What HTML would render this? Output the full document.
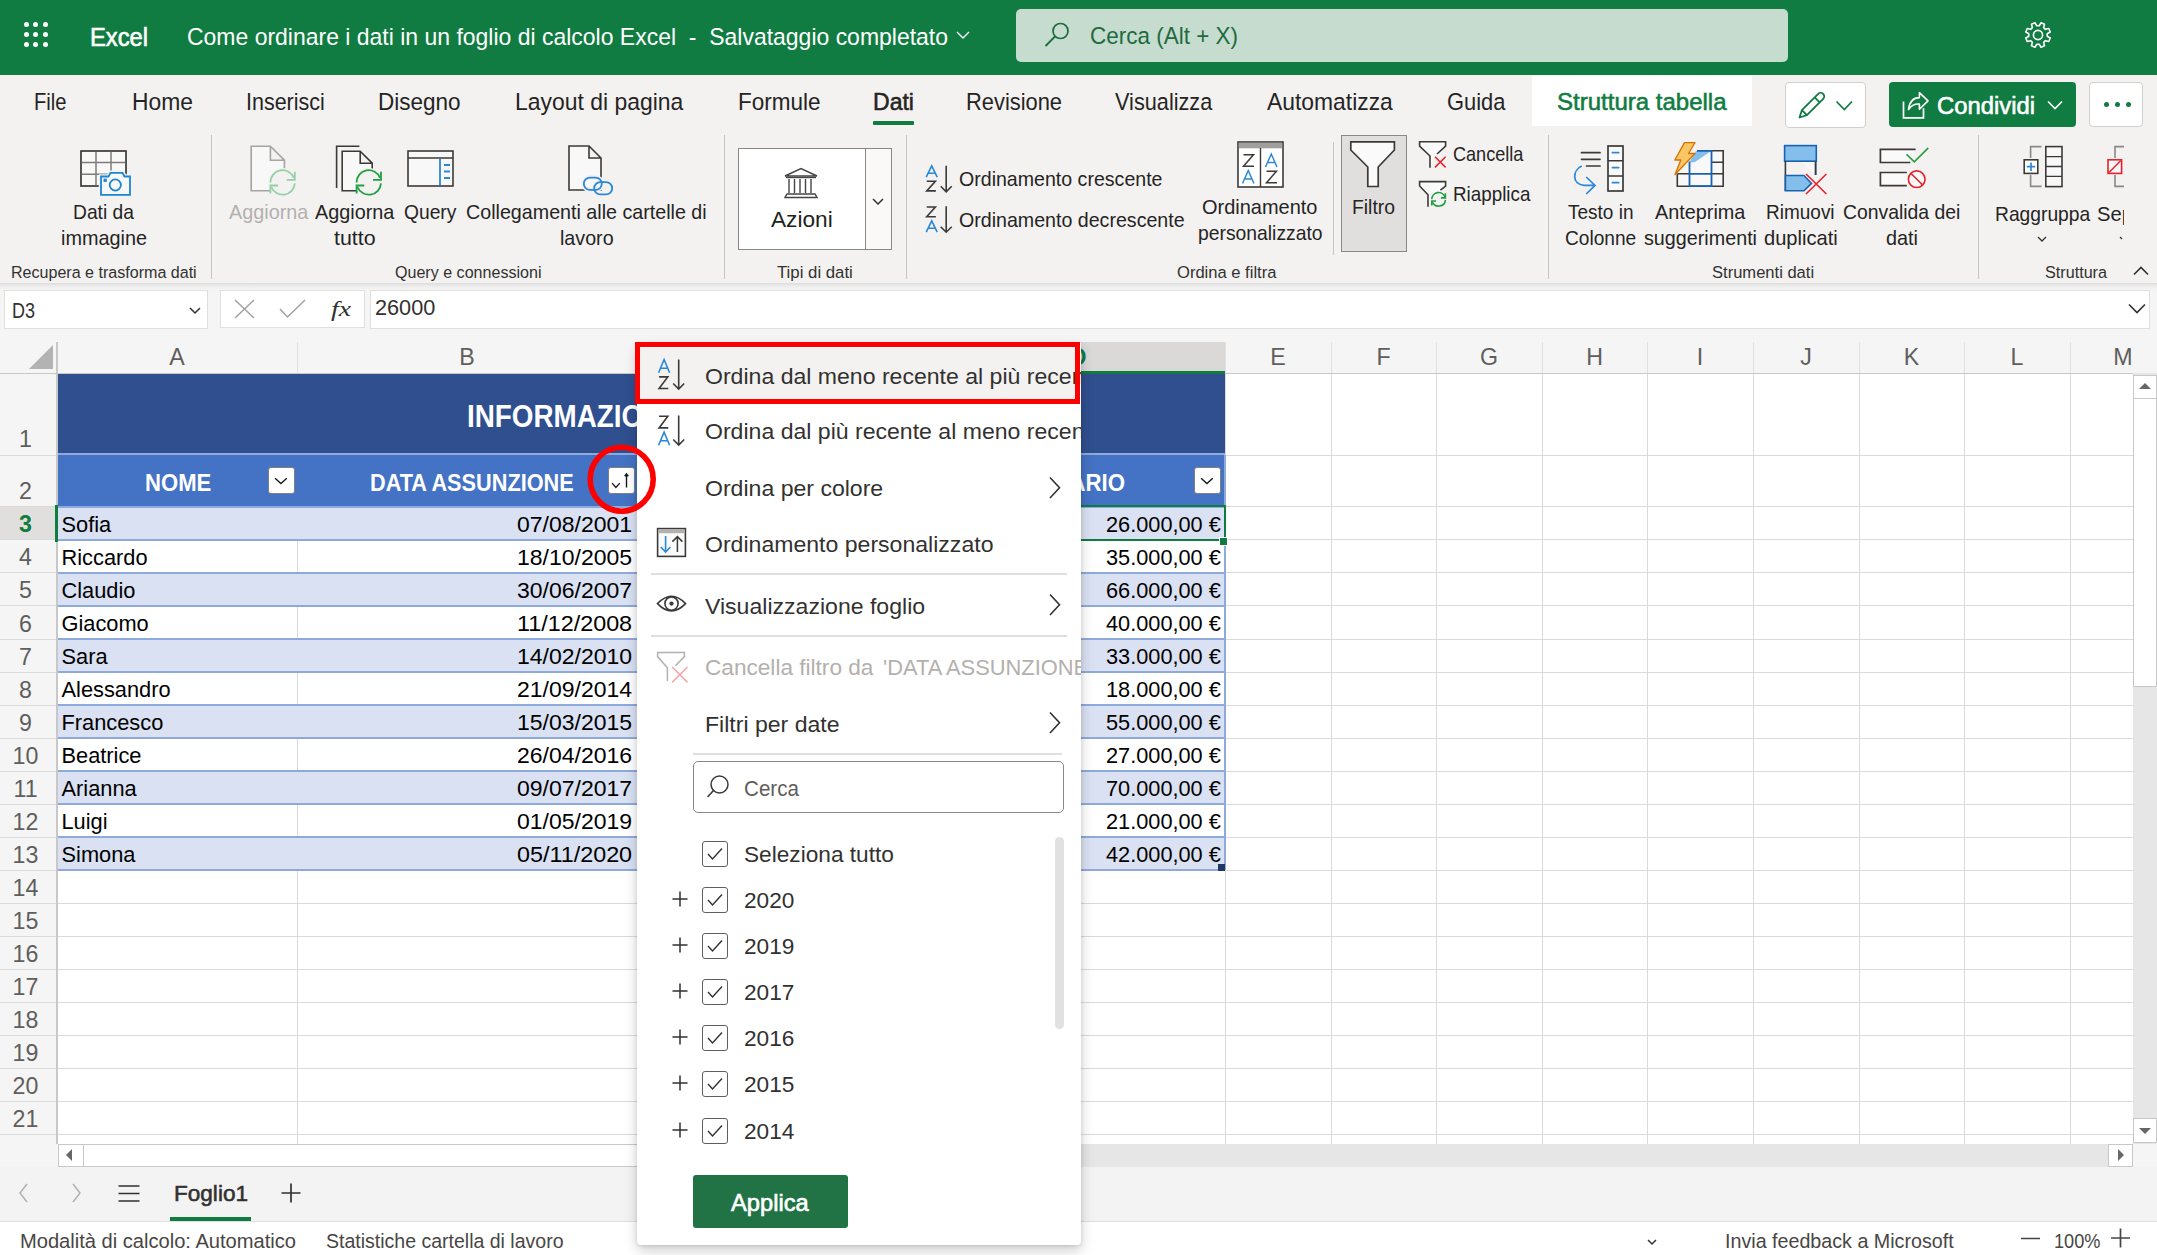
<!DOCTYPE html>
<html><head><meta charset="utf-8"><title>Excel</title>
<style>
html,body{margin:0;padding:0;}
body{width:2157px;height:1255px;overflow:hidden;position:relative;background:#fff;font-family:"Liberation Sans",sans-serif;}
.tx{position:absolute;white-space:pre;line-height:1;transform-origin:0 0;}
svg{position:absolute;overflow:visible;}
</style></head><body>
<div style="position:absolute;left:0px;top:0px;width:2157px;height:75px;background:#107c41"></div>
<div style="position:absolute;left:23.5px;top:22.0px;width:5px;height:5px;border-radius:50%;background:#fff"></div>
<div style="position:absolute;left:23.5px;top:31.8px;width:5px;height:5px;border-radius:50%;background:#fff"></div>
<div style="position:absolute;left:23.5px;top:41.6px;width:5px;height:5px;border-radius:50%;background:#fff"></div>
<div style="position:absolute;left:33.3px;top:22.0px;width:5px;height:5px;border-radius:50%;background:#fff"></div>
<div style="position:absolute;left:33.3px;top:31.8px;width:5px;height:5px;border-radius:50%;background:#fff"></div>
<div style="position:absolute;left:33.3px;top:41.6px;width:5px;height:5px;border-radius:50%;background:#fff"></div>
<div style="position:absolute;left:43.1px;top:22.0px;width:5px;height:5px;border-radius:50%;background:#fff"></div>
<div style="position:absolute;left:43.1px;top:31.8px;width:5px;height:5px;border-radius:50%;background:#fff"></div>
<div style="position:absolute;left:43.1px;top:41.6px;width:5px;height:5px;border-radius:50%;background:#fff"></div>
<span id="t0" class="tx" style="transform:scaleX(0.9324);left:90.00px;top:25.00px;font-size:25.44px;color:#fff;font-weight:400;font-family:'Liberation Sans', sans-serif;-webkit-text-stroke:0.6px #fff;">Excel</span>
<span id="t1" class="tx" style="transform:scaleX(0.9880);left:187.00px;top:26.00px;font-size:23.26px;color:#fff;font-weight:400;font-family:'Liberation Sans', sans-serif;">Come ordinare i dati in un foglio di calcolo Excel  -  Salvataggio completato</span>
<svg style="left:956px;top:31px" width="14" height="9"><path d="M1 1 L7 7 L13 1" fill="none" stroke="#fff" stroke-width="1.4"/></svg>
<div style="position:absolute;left:1016px;top:9px;width:772px;height:53px;border-radius:5px;background:#c6dcce"></div>
<svg style="left:1044px;top:22px" width="26" height="26"><circle cx="16.5" cy="9" r="7.5" fill="none" stroke="#1d6b3f" stroke-width="1.7"/><path d="M11 14.5 L2 23.5" stroke="#1d6b3f" stroke-width="1.8" stroke-linecap="round"/></svg>
<span id="t2" class="tx" style="transform:scaleX(0.9666);left:1090.00px;top:25.00px;font-size:23.26px;color:#1d6b3f;font-weight:400;font-family:'Liberation Sans', sans-serif;">Cerca (Alt + X)</span>
<svg style="left:2024px;top:21px" width="28" height="28" viewBox="0 0 28 28"><g fill="none" stroke="#fff" stroke-width="1.6">
<path d="M15.21 4.78 L17.05 1.77 L20.49 3.20 L19.66 6.62 L21.38 8.34 L24.80 7.51 L26.23 10.95 L23.22 12.79 L23.22 15.21 L26.23 17.05 L24.80 20.49 L21.38 19.66 L19.66 21.38 L20.49 24.80 L17.05 26.23 L15.21 23.22 L12.79 23.22 L10.95 26.23 L7.51 24.80 L8.34 21.38 L6.62 19.66 L3.20 20.49 L1.77 17.05 L4.78 15.21 L4.78 12.79 L1.77 10.95 L3.20 7.51 L6.62 8.34 L8.34 6.62 L7.51 3.20 L10.95 1.77 L12.79 4.78 Z" stroke-linejoin="round"/>
<circle cx="14" cy="14" r="4.6"/></g></svg>
<div style="position:absolute;left:0px;top:75px;width:2157px;height:208px;background:#f3f2f1"></div>
<span id="t3" class="tx" style="transform:scaleX(0.8674);left:34.00px;top:91.00px;font-size:23.26px;color:#252423;font-weight:400;font-family:'Liberation Sans', sans-serif;">File</span>
<span id="t4" class="tx" style="transform:scaleX(0.9834);left:132.00px;top:91.00px;font-size:23.26px;color:#252423;font-weight:400;font-family:'Liberation Sans', sans-serif;">Home</span>
<span id="t5" class="tx" style="transform:scaleX(0.9240);left:245.70px;top:91.00px;font-size:23.26px;color:#252423;font-weight:400;font-family:'Liberation Sans', sans-serif;">Inserisci</span>
<span id="t6" class="tx" style="transform:scaleX(0.9682);left:378.00px;top:91.00px;font-size:23.26px;color:#252423;font-weight:400;font-family:'Liberation Sans', sans-serif;">Disegno</span>
<span id="t7" class="tx" style="transform:scaleX(0.9863);left:515.40px;top:91.00px;font-size:23.26px;color:#252423;font-weight:400;font-family:'Liberation Sans', sans-serif;">Layout di pagina</span>
<span id="t8" class="tx" style="transform:scaleX(0.9686);left:738.00px;top:91.00px;font-size:23.26px;color:#252423;font-weight:400;font-family:'Liberation Sans', sans-serif;">Formule</span>
<span id="t9" class="tx" style="transform:scaleX(0.9913);left:873.00px;top:91.00px;font-size:23.26px;color:#252423;font-weight:400;font-family:'Liberation Sans', sans-serif;-webkit-text-stroke:0.55px #252423;">Dati</span>
<span id="t10" class="tx" style="transform:scaleX(0.9403);left:966.00px;top:91.00px;font-size:23.26px;color:#252423;font-weight:400;font-family:'Liberation Sans', sans-serif;">Revisione</span>
<span id="t11" class="tx" style="transform:scaleX(0.9332);left:1115.00px;top:91.00px;font-size:23.26px;color:#252423;font-weight:400;font-family:'Liberation Sans', sans-serif;">Visualizza</span>
<span id="t12" class="tx" style="transform:scaleX(0.9833);left:1267.20px;top:91.00px;font-size:23.26px;color:#252423;font-weight:400;font-family:'Liberation Sans', sans-serif;">Automatizza</span>
<span id="t13" class="tx" style="transform:scaleX(0.9412);left:1447.00px;top:91.00px;font-size:23.26px;color:#252423;font-weight:400;font-family:'Liberation Sans', sans-serif;">Guida</span>
<div style="position:absolute;left:873px;top:121px;width:41px;height:4px;background:#107c41;border-radius:1px"></div>
<div style="position:absolute;left:1532px;top:76px;width:220px;height:50px;background:#fff"></div>
<span id="t14" class="tx" style="transform:scaleX(1.0327);left:1557.00px;top:91.00px;font-size:23.26px;color:#107c41;font-weight:400;font-family:'Liberation Sans', sans-serif;-webkit-text-stroke:0.55px #107c41;">Struttura tabella</span>
<div style="position:absolute;left:1785px;top:82px;width:80.5px;height:45.5px;box-sizing:border-box;border:1px solid #d2d0ce;border-radius:4px;background:#fff"></div>
<svg style="left:0;top:0" width="1" height="1"><path d="M1799.5 117.5 L1801.9 110.1 L1818.2 93.8 A3.5 3.5 0 0 1 1823.2 98.8 L1806.9 115.1 Z M1801.9 110.1 L1806.9 115.1 M1814.7 97.3 L1819.7 102.3" fill="none" stroke="#107c41" stroke-width="1.8" stroke-linejoin="round"/></svg>
<svg style="left:1836px;top:100px" width="17" height="11"><path d="M0.5 1.5 L8.3 9.5 L16 1.5" fill="none" stroke="#107c41" stroke-width="1.7"/></svg>
<div style="position:absolute;left:1889px;top:82px;width:187px;height:45px;border-radius:4px;background:#107c41"></div>
<svg style="left:0;top:0" width="1" height="1"><path d="M1903.5 101.5 V117.8 H1923.5 V108.2" fill="none" stroke="#fff" stroke-width="1.7"/><path d="M1908.5 109.5 Q1910 97.6 1919.4 97.6 V92.6 L1928 100.9 L1919.4 109.3 V104 Q1912.5 103.5 1908.5 109.5 Z" fill="none" stroke="#fff" stroke-width="1.6" stroke-linejoin="round"/></svg>
<span id="t15" class="tx" style="transform:scaleX(0.9940);left:1937.00px;top:94.00px;font-size:23.98px;color:#fff;font-weight:400;font-family:'Liberation Sans', sans-serif;-webkit-text-stroke:0.6px #fff;">Condividi</span>
<svg style="left:2047px;top:100px" width="16" height="10"><path d="M1 1.5 L8 8.5 L15 1.5" fill="none" stroke="#fff" stroke-width="1.6"/></svg>
<div style="position:absolute;left:2089px;top:82px;width:54px;height:45px;box-sizing:border-box;border:1px solid #d2d0ce;border-radius:4px;background:#fff"></div>
<div style="position:absolute;left:2104px;top:102px;width:5px;height:5px;border-radius:50%;background:#107c41"></div>
<div style="position:absolute;left:2115px;top:102px;width:5px;height:5px;border-radius:50%;background:#107c41"></div>
<div style="position:absolute;left:2126px;top:102px;width:5px;height:5px;border-radius:50%;background:#107c41"></div>
<div style="position:absolute;left:211px;top:135px;width:1.3px;height:144px;background:#c8c6c4"></div>
<div style="position:absolute;left:724px;top:135px;width:1.3px;height:144px;background:#c8c6c4"></div>
<div style="position:absolute;left:906px;top:135px;width:1.3px;height:144px;background:#c8c6c4"></div>
<div style="position:absolute;left:1548px;top:135px;width:1.3px;height:144px;background:#c8c6c4"></div>
<div style="position:absolute;left:1977.5px;top:135px;width:1.3px;height:144px;background:#c8c6c4"></div>
<div style="position:absolute;left:1333px;top:142px;width:1.3px;height:113px;background:#c8c6c4"></div>
<span id="t16" class="tx" style="transform:scaleX(0.9527);left:11.30px;top:265.00px;font-size:16.86px;color:#323130;font-weight:400;font-family:'Liberation Sans', sans-serif;">Recupera e trasforma dati</span>
<span id="t17" class="tx" style="transform:scaleX(0.9531);left:394.50px;top:265.00px;font-size:16.86px;color:#323130;font-weight:400;font-family:'Liberation Sans', sans-serif;">Query e connessioni</span>
<span id="t18" class="tx" style="transform:scaleX(0.9945);left:777.00px;top:265.00px;font-size:16.86px;color:#323130;font-weight:400;font-family:'Liberation Sans', sans-serif;">Tipi di dati</span>
<span id="t19" class="tx" style="transform:scaleX(0.9822);left:1177.00px;top:265.00px;font-size:16.86px;color:#323130;font-weight:400;font-family:'Liberation Sans', sans-serif;">Ordina e filtra</span>
<span id="t20" class="tx" style="transform:scaleX(0.9816);left:1711.60px;top:265.00px;font-size:16.86px;color:#323130;font-weight:400;font-family:'Liberation Sans', sans-serif;">Strumenti dati</span>
<span id="t21" class="tx" style="transform:scaleX(0.9589);left:2045.00px;top:265.00px;font-size:16.86px;color:#323130;font-weight:400;font-family:'Liberation Sans', sans-serif;">Struttura</span>
<span id="t22" class="tx" style="transform:scaleX(0.9520);left:73.40px;top:202.00px;font-size:20.2px;color:#252423;font-weight:400;font-family:'Liberation Sans', sans-serif;">Dati da</span>
<span id="t23" class="tx" style="transform:scaleX(0.9827);left:61.00px;top:228.00px;font-size:20.2px;color:#252423;font-weight:400;font-family:'Liberation Sans', sans-serif;">immagine</span>
<span id="t24" class="tx" style="transform:scaleX(0.9825);left:228.60px;top:202.00px;font-size:20.2px;color:#b3b0ad;font-weight:400;font-family:'Liberation Sans', sans-serif;">Aggiorna</span>
<span id="t25" class="tx" style="transform:scaleX(0.9825);left:314.60px;top:202.00px;font-size:20.2px;color:#252423;font-weight:400;font-family:'Liberation Sans', sans-serif;">Aggiorna</span>
<span id="t26" class="tx" style="transform:scaleX(1.0590);left:333.80px;top:228.00px;font-size:20.2px;color:#252423;font-weight:400;font-family:'Liberation Sans', sans-serif;">tutto</span>
<span id="t27" class="tx" style="transform:scaleX(0.9530);left:404.00px;top:202.00px;font-size:20.2px;color:#252423;font-weight:400;font-family:'Liberation Sans', sans-serif;">Query</span>
<span id="t28" class="tx" style="transform:scaleX(0.9750);left:466.30px;top:202.00px;font-size:20.2px;color:#252423;font-weight:400;font-family:'Liberation Sans', sans-serif;">Collegamenti alle cartelle di</span>
<span id="t29" class="tx" style="transform:scaleX(0.9748);left:560.00px;top:228.00px;font-size:20.2px;color:#252423;font-weight:400;font-family:'Liberation Sans', sans-serif;">lavoro</span>
<span id="t30" class="tx" style="transform:scaleX(0.9698);left:959.00px;top:169.00px;font-size:20.2px;color:#252423;font-weight:400;font-family:'Liberation Sans', sans-serif;">Ordinamento crescente</span>
<span id="t31" class="tx" style="transform:scaleX(0.9712);left:959.00px;top:210.00px;font-size:20.2px;color:#252423;font-weight:400;font-family:'Liberation Sans', sans-serif;">Ordinamento decrescente</span>
<span id="t32" class="tx" style="transform:scaleX(0.9888);left:1202.30px;top:197.00px;font-size:20.2px;color:#252423;font-weight:400;font-family:'Liberation Sans', sans-serif;">Ordinamento</span>
<span id="t33" class="tx" style="transform:scaleX(0.9571);left:1198.30px;top:223.00px;font-size:20.2px;color:#252423;font-weight:400;font-family:'Liberation Sans', sans-serif;">personalizzato</span>
<span id="t34" class="tx" style="transform:scaleX(0.8961);left:1453.20px;top:144.00px;font-size:20.2px;color:#252423;font-weight:400;font-family:'Liberation Sans', sans-serif;">Cancella</span>
<span id="t35" class="tx" style="transform:scaleX(0.9320);left:1453.00px;top:184.00px;font-size:20.2px;color:#252423;font-weight:400;font-family:'Liberation Sans', sans-serif;">Riapplica</span>
<span id="t36" class="tx" style="transform:scaleX(0.9414);left:1568.00px;top:202.00px;font-size:20.2px;color:#252423;font-weight:400;font-family:'Liberation Sans', sans-serif;">Testo in</span>
<span id="t37" class="tx" style="transform:scaleX(0.9468);left:1565.20px;top:228.00px;font-size:20.2px;color:#252423;font-weight:400;font-family:'Liberation Sans', sans-serif;">Colonne</span>
<span id="t38" class="tx" style="transform:scaleX(0.9824);left:1655.00px;top:202.00px;font-size:20.2px;color:#252423;font-weight:400;font-family:'Liberation Sans', sans-serif;">Anteprima</span>
<span id="t39" class="tx" style="transform:scaleX(0.9777);left:1643.50px;top:228.00px;font-size:20.2px;color:#252423;font-weight:400;font-family:'Liberation Sans', sans-serif;">suggerimenti</span>
<span id="t40" class="tx" style="transform:scaleX(0.9407);left:1766.00px;top:202.00px;font-size:20.2px;color:#252423;font-weight:400;font-family:'Liberation Sans', sans-serif;">Rimuovi</span>
<span id="t41" class="tx" style="transform:scaleX(0.9962);left:1763.70px;top:228.00px;font-size:20.2px;color:#252423;font-weight:400;font-family:'Liberation Sans', sans-serif;">duplicati</span>
<span id="t42" class="tx" style="transform:scaleX(0.9589);left:1843.20px;top:202.00px;font-size:20.2px;color:#252423;font-weight:400;font-family:'Liberation Sans', sans-serif;">Convalida dei</span>
<span id="t43" class="tx" style="transform:scaleX(0.9827);left:1886.00px;top:228.00px;font-size:20.2px;color:#252423;font-weight:400;font-family:'Liberation Sans', sans-serif;">dati</span>
<span id="t44" class="tx" style="transform:scaleX(0.9529);left:1995.40px;top:204.00px;font-size:20.2px;color:#252423;font-weight:400;font-family:'Liberation Sans', sans-serif;">Raggruppa</span>
<div style="position:absolute;left:2095px;top:195px;width:28.5px;height:40px;overflow:hidden">
<span id="t45" class="tx" style="left:2.00px;top:9.00px;font-size:20.2px;color:#252423;font-weight:400;font-family:'Liberation Sans', sans-serif;">Separa</span>
</div>
<svg style="left:2037px;top:236px" width="10" height="7"><path d="M1 1 L5 5 L9 1" fill="none" stroke="#323130" stroke-width="1.3"/></svg>
<svg style="left:2119px;top:236px" width="4" height="7"><path d="M1 1 L3 3" fill="none" stroke="#323130" stroke-width="1.3"/></svg>
<svg style="left:2133px;top:266px" width="16" height="10"><path d="M1 8.5 L8 1.5 L15 8.5" fill="none" stroke="#323130" stroke-width="1.6"/></svg>
<div style="position:absolute;left:738px;top:148px;width:154px;height:102px;box-sizing:border-box;border:1px solid #8a8886;background:#fff"></div>
<div style="position:absolute;left:865px;top:149px;width:1px;height:100px;background:#8a8886"></div>
<div style="position:absolute;left:866px;top:149px;width:25px;height:100px;background:#faf9f8"></div>
<svg style="left:872px;top:198px" width="12" height="8"><path d="M1 1 L6 6 L11 1" fill="none" stroke="#323130" stroke-width="1.5"/></svg>
<span id="t46" class="tx" style="transform:scaleX(1.0188);left:771.00px;top:209.00px;font-size:22.24px;color:#201f1e;font-weight:400;font-family:'Liberation Sans', sans-serif;">Azioni</span>
<svg style="left:783px;top:167px" width="36" height="32" viewBox="0 0 36 32"><g fill="none" stroke="#444" stroke-width="1.4">
<path d="M2 9 L18 1.5 L34 9 Z"/><path d="M3 10.5 H33"/><path d="M6 12 V26 M11.5 12 V26 M17 12 V26 M22.5 12 V26 M28 12 V26"/><path d="M4 27 H32 L34 30.5 H2 Z"/></g></svg>
<svg style="left:80px;top:150px" width="52" height="46" viewBox="0 0 52 46">
<rect x="1" y="1" width="45" height="35" fill="#f8f8f8" stroke="#3b3a39" stroke-width="1.7"/><path d="M1.8 12.6 H45.2 M1.8 24.2 H45.2 M16 1.8 V35.2 M31 1.8 V35.2" fill="none" stroke="#7f7b78" stroke-width="1.5"/>
<path d="M21 26.5 h7.5 l2-3.7 h12 l2 3.7 h5.5 v18.3 h-29 z" fill="#f8f8f8" stroke="#f3f2f1" stroke-width="4.5"/>
<path d="M21 26.5 h7.5 l2-3.7 h12 l2 3.7 h5.5 v18.3 h-29 z" fill="#f8f8f8" stroke="#1b86d1" stroke-width="1.8"/><circle cx="35.3" cy="35" r="5.6" fill="none" stroke="#1b86d1" stroke-width="1.8"/><rect x="23.5" y="28.6" width="3.3" height="3.3" fill="#1b86d1"/></svg>
<svg style="left:0;top:0" width="1" height="1"><path d="M251.2 146.2 H270.4 L284.4 160.2 V190.79999999999998 H251.2 Z M270.4 146.2 V160.2 H284.4" fill="#f8f8f8" stroke="#a6a4a2" stroke-width="1.6" stroke-linejoin="miter"/><circle cx="282.6" cy="182.4" r="14.5" fill="#f3f2f1"/><g fill="none" stroke="#94d1a8" stroke-width="1.8"><path d="M270.40000000000003 182.4 A12.2 12.2 0 0 1 293.91 177.83"/><path d="M294.8 183.40 A12.2 12.2 0 0 1 271.29 186.97"/><path d="M294.80 171.70 V179.80 H286.80"/><path d="M270.40 193.60 V185.50 H278.10"/></g></svg>
<svg style="left:0;top:0" width="1" height="1"><path d="M336.6 188 V146.2 H359.4" fill="none" stroke="#3b3a39" stroke-width="1.6"/><path d="M342.2 151.2 H360.2 L372.2 163.2 V190.79999999999998 H342.2 Z M360.2 151.2 V163.2 H372.2" fill="#f8f8f8" stroke="#3b3a39" stroke-width="1.6" stroke-linejoin="miter"/><circle cx="368.8" cy="182.4" r="14.5" fill="#f3f2f1"/><g fill="none" stroke="#21a043" stroke-width="1.8"><path d="M356.6 182.4 A12.2 12.2 0 0 1 380.11 177.83"/><path d="M381.0 183.40 A12.2 12.2 0 0 1 357.49 186.97"/><path d="M381.00 171.70 V179.80 H373.00"/><path d="M356.60 193.60 V185.50 H364.30"/></g></svg>
<svg style="left:0;top:0" width="1" height="1"><rect x="408" y="151" width="45" height="35" fill="#f8f8f8" stroke="#3b3a39" stroke-width="1.6"/><path d="M408 158 H453" stroke="#3b3a39" stroke-width="1.6"/>
<path d="M440 159 V185" stroke="#2b88d8" stroke-width="1.8"/><path d="M444 165 H450 M444 171.5 H450 M444 178 H450" stroke="#2b88d8" stroke-width="1.8"/></svg>
<svg style="left:0;top:0" width="1" height="1"><path d="M569 146 H589 L601 158 V190 H569 Z M589 146 V158 H601" fill="#f8f8f8" stroke="#3b3a39" stroke-width="1.6" stroke-linejoin="miter"/>
<g fill="none" stroke="#f3f2f1" stroke-width="5"><rect x="583.8" y="177.6" width="18" height="12.2" rx="6.1"/><rect x="594.2" y="182.2" width="18" height="12.2" rx="6.1"/></g><g fill="none" stroke="#2b88d8" stroke-width="1.8"><rect x="583.8" y="177.6" width="18" height="12.2" rx="6.1"/><rect x="594.2" y="182.2" width="18" height="12.2" rx="6.1"/></g></svg>
<svg style="left:0;top:0" width="1" height="1"><path d="M926.2 177.10000000000002 L931.7 165.8 L937.2 177.10000000000002 M928.4000000000001 173.258 H935.0" fill="none" stroke="#2b88d8" stroke-width="1.6" stroke-linejoin="miter"/><path d="M926.7 181.20000000000005 H935.38 L926.7 190.90000000000003 H935.88" fill="none" stroke="#3b3a39" stroke-width="1.6" stroke-linejoin="miter"/><path d="M946.2 165.8 V191.8 M940.7 186.3 L946.2 191.8 L951.7 186.3" fill="none" stroke="#3b3a39" stroke-width="1.6"/></svg>
<svg style="left:0;top:0" width="1" height="1"><path d="M926.7 207.0 H935.38 L926.7 216.7 H935.88" fill="none" stroke="#3b3a39" stroke-width="1.6" stroke-linejoin="miter"/><path d="M926.2 232.10000000000002 L931.7 220.8 L937.2 232.10000000000002 M928.4000000000001 228.258 H935.0" fill="none" stroke="#2b88d8" stroke-width="1.6" stroke-linejoin="miter"/><path d="M946.2 206.2 V232.2 M940.7 226.7 L946.2 232.2 L951.7 226.7" fill="none" stroke="#3b3a39" stroke-width="1.6"/></svg>
<svg style="left:0;top:0" width="1" height="1"><rect x="1238" y="142" width="45" height="45" fill="#fff" stroke="#3b3a39" stroke-width="1.6"/><rect x="1238.8" y="142.8" width="43.4" height="5.5" fill="#a19f9d"/><path d="M1260.5 148 V187" stroke="#3b3a39" stroke-width="1.4"/></svg>
<svg style="left:0;top:0" width="1" height="1"><path d="M1243.5 154.75 H1253.5 L1243.5 166.25 H1254" fill="none" stroke="#3b3a39" stroke-width="1.5" stroke-linejoin="miter"/><path d="M1242.5 183.5 L1248.25 170.5 L1254.0 183.5 M1244.8 179.08 H1251.7" fill="none" stroke="#2b88d8" stroke-width="1.5" stroke-linejoin="miter"/><path d="M1265.5 167 L1271.25 154 L1277.0 167 M1267.8 162.58 H1274.7" fill="none" stroke="#2b88d8" stroke-width="1.5" stroke-linejoin="miter"/><path d="M1266.5 171.25 H1276.5 L1266.5 182.75 H1277" fill="none" stroke="#3b3a39" stroke-width="1.5" stroke-linejoin="miter"/></svg>
<div style="position:absolute;left:1341px;top:135px;width:66px;height:117px;box-sizing:border-box;border:1px solid #8a8886;background:#e1dfdd"></div>
<span id="t47" class="tx" style="transform:scaleX(0.9582);left:1352.00px;top:197.00px;font-size:20.2px;color:#252423;font-weight:400;font-family:'Liberation Sans', sans-serif;">Filtro</span>
<svg style="left:0;top:0" width="1" height="1"><path d="M1350.8 141.8 H1394.4 V150 L1378.2 167 V186.5 H1367.8 V167 L1350.8 150 Z" fill="#fafafa" stroke="#3b3a39" stroke-width="1.7" stroke-linejoin="miter"/></svg>
<svg style="left:0;top:0" width="1" height="1"><path d="M1437 154 L1445.6 146.2 V141.8 H1419.6 V146.2 L1430 156 V167.8" fill="#fafafa" stroke="#3b3a39" stroke-width="1.6"/>
<path d="M1435 156.8 L1445.6 167.4 M1445.6 156.8 L1435 167.4" stroke="#e8202a" stroke-width="1.5"/></svg>
<svg style="left:0;top:0" width="1" height="1"><path d="M1440.4 190.2 L1445.6 186 V181.6 H1419.6 V186 L1428 194.7 V206.8" fill="#fafafa" stroke="#3b3a39" stroke-width="1.6"/>
<g fill="none" stroke="#21a043" stroke-width="1.6"><path d="M1431.8 199.3 A6.8 6.8 0 0 1 1444.90 196.75"/><path d="M1445.3999999999999 199.86 A6.8 6.8 0 0 1 1432.30 201.85"/><path d="M1445.40 193.34 V197.85 H1440.94"/><path d="M1431.80 205.54 V201.03 H1436.09"/></g></svg>
<svg style="left:0;top:0" width="1" height="1"><g stroke="#3b3a39" stroke-width="1.7" fill="none" stroke-linecap="round"><path d="M1581.5 152.7 H1600 M1581.5 159.3 H1600 M1586.5 166 H1600"/></g>
<rect x="1608" y="146" width="15" height="45" fill="#fafafa" stroke="#3b3a39" stroke-width="1.7"/><path d="M1608 160.8 H1623 M1608 176 H1623" stroke="#3b3a39" stroke-width="1.6"/>
<path d="M1612.4 152.7 H1618.7 M1612.4 167.6 H1618.7 M1612.4 182.7 H1618.7" stroke="#2b88d8" stroke-width="1.7" stroke-linecap="round"/>
<path d="M1581.8 166 C1572.5 170 1571.5 184.5 1584 185.3 L1595 185.4 M1586.2 177 L1595 185.4 L1586.2 194" fill="none" stroke="#2b88d8" stroke-width="1.7"/></svg>
<svg style="left:0;top:0" width="1" height="1">
<path d="M1696 151 H1711.5 V162.3 H1689.5 Z" fill="#83beec"/>
<path d="M1711.5 150.8 H1723.2 V186.2 H1677.3 V174" fill="#f8f8f8" stroke="#3b3a39" stroke-width="1.6"/>
<path d="M1711.5 162.3 H1723.2 M1711.5 173.8 H1723.2 M1677.3 173.8 H1689.5" stroke="#3b3a39" stroke-width="1.4"/>
<path d="M1697 150.8 H1711.5 V186.2 H1689.5 V161.5 M1689.5 173.8 H1711.5" fill="none" stroke="#1a62b1" stroke-width="1.8"/>
<path d="M1684.5 142.6 H1695 L1688.5 153.5 H1695 L1675 174.5 L1680.8 160 H1674.8 Z" fill="#f8c663" stroke="#d67300" stroke-width="1.3" stroke-linejoin="round"/></svg>
<svg style="left:0;top:0" width="1" height="1">
<path d="M1785.4 146.4 H1815.6 V175" fill="#f8f8f8" stroke="#1a62b1" stroke-width="1.6"/>
<rect x="1784.6" y="145.6" width="31.7" height="15.6" fill="#83beec" stroke="#1a62b1" stroke-width="1.6"/>
<path d="M1785.4 161 V191" stroke="#3b3a39" stroke-width="1.6"/>
<path d="M1815.6 161 V175" stroke="#3b3a39" stroke-width="1.6"/>
<path d="M1785.4 175.5 H1804 L1811.5 183.4 L1804 190.8 H1785.4 Z" fill="#83beec" stroke="#1a62b1" stroke-width="1.6"/>
<path d="M1806 174 L1826.4 194 M1826.4 174 L1806 194" stroke="#e8202a" stroke-width="1.6"/></svg>
<svg style="left:0;top:0" width="1" height="1"><g fill="#fafafa" stroke="#3b3a39" stroke-width="1.7"><path d="M1915.6 149.3 H1880.4 V162.5 H1910.3"/><path d="M1906.8 172.5 H1880.4 V185.7 H1906.8"/></g>
<path d="M1906.6 154.4 L1914.3 161.8 L1928.3 147.8" fill="none" stroke="#2ea043" stroke-width="1.7"/>
<circle cx="1916.7" cy="179.2" r="8.3" fill="#fafafa" stroke="#e8202a" stroke-width="1.6"/><path d="M1911 173.5 L1922.4 184.8" stroke="#e8202a" stroke-width="1.6"/></svg>
<svg style="left:0;top:0" width="1" height="1"><g fill="none" stroke="#8a8886" stroke-width="1.6"><path d="M2041.5 146.6 H2030.6 V158 M2030.6 175 V186.4 H2041.5"/></g>
<rect x="2024.2" y="159.8" width="13.6" height="13.6" fill="#fff" stroke="#3b3a39" stroke-width="1.6"/><path d="M2031 162.5 V171 M2026.8 166.7 H2035.2" stroke="#2b88d8" stroke-width="1.7"/>
<rect x="2045.8" y="146.6" width="16.2" height="40" fill="#f8f8f8" stroke="#3b3a39" stroke-width="1.6"/><path d="M2045.8 156.6 H2062 M2045.8 166.5 H2062 M2045.8 176.4 H2062" stroke="#3b3a39" stroke-width="1.4"/>
<path d="M2124 146.6 H2115 V158 M2115 175 V186.4 H2124" fill="none" stroke="#8a8886" stroke-width="1.6"/>
<rect x="2108" y="159.8" width="13.6" height="13.6" fill="#f8f8f8" stroke="#e8202a" stroke-width="1.6"/><path d="M2109 172.5 L2120.6 160.7" stroke="#e8202a" stroke-width="1.5"/></svg>
<div style="position:absolute;left:0px;top:283px;width:2157px;height:890px;background:#f5f5f5"></div>
<div style="position:absolute;left:0;top:283px;width:2157px;height:7px;background:linear-gradient(#dcdcdc,#ebebeb 40%,#f5f5f5)"></div>
<div style="position:absolute;left:4px;top:290px;width:204px;height:39px;box-sizing:border-box;border:1px solid #e1dfdd;background:#fff"></div>
<span id="t48" class="tx" style="transform:scaleX(0.8479);left:12.00px;top:300.00px;font-size:21.22px;color:#323130;font-weight:400;font-family:'Liberation Sans', sans-serif;">D3</span>
<svg style="left:189px;top:307px" width="12" height="8"><path d="M1 1 L6 6 L11 1" fill="none" stroke="#323130" stroke-width="1.5"/></svg>
<div style="position:absolute;left:220px;top:290px;width:145px;height:38px;box-sizing:border-box;border:1px solid #e1dfdd;background:#fff"></div>
<svg style="left:0;top:0" width="1" height="1"><path d="M235 300 L254 318 M254 300 L235 318" stroke="#a19f9d" stroke-width="1.4"/><path d="M280 309 L287.5 317 L305 300" fill="none" stroke="#a19f9d" stroke-width="1.4"/></svg>
<span id="t49" class="tx" style="transform:scaleX(1.2586);left:331.00px;top:298.00px;font-size:22px;color:#323130;font-weight:400;font-family:'Liberation Serif', serif;font-style:italic;">fx</span>
<div style="position:absolute;left:370px;top:290px;width:1780px;height:39px;box-sizing:border-box;border:1px solid #e1dfdd;background:#fff"></div>
<span id="t50" class="tx" style="transform:scaleX(1.0084);left:375.00px;top:298.00px;font-size:21.51px;color:#323130;font-weight:400;font-family:'Liberation Sans', sans-serif;">26000</span>
<svg style="left:2128px;top:303px" width="18" height="11"><path d="M1 1.5 L9 9.5 L17 1.5" fill="none" stroke="#323130" stroke-width="1.6"/></svg>
<div style="position:absolute;left:58px;top:373px;width:2075px;height:771px;background:#fff"></div>
<div style="position:absolute;left:297px;top:373px;width:1px;height:771px;background:#dadada"></div>
<div style="position:absolute;left:297px;top:342px;width:1px;height:31px;background:#e1e1e1"></div>
<div style="position:absolute;left:637px;top:373px;width:1px;height:771px;background:#dadada"></div>
<div style="position:absolute;left:637px;top:342px;width:1px;height:31px;background:#e1e1e1"></div>
<div style="position:absolute;left:931px;top:373px;width:1px;height:771px;background:#dadada"></div>
<div style="position:absolute;left:931px;top:342px;width:1px;height:31px;background:#e1e1e1"></div>
<div style="position:absolute;left:1225px;top:373px;width:1px;height:771px;background:#dadada"></div>
<div style="position:absolute;left:1225px;top:342px;width:1px;height:31px;background:#e1e1e1"></div>
<div style="position:absolute;left:1331px;top:373px;width:1px;height:771px;background:#dadada"></div>
<div style="position:absolute;left:1331px;top:342px;width:1px;height:31px;background:#e1e1e1"></div>
<div style="position:absolute;left:1436px;top:373px;width:1px;height:771px;background:#dadada"></div>
<div style="position:absolute;left:1436px;top:342px;width:1px;height:31px;background:#e1e1e1"></div>
<div style="position:absolute;left:1542px;top:373px;width:1px;height:771px;background:#dadada"></div>
<div style="position:absolute;left:1542px;top:342px;width:1px;height:31px;background:#e1e1e1"></div>
<div style="position:absolute;left:1647px;top:373px;width:1px;height:771px;background:#dadada"></div>
<div style="position:absolute;left:1647px;top:342px;width:1px;height:31px;background:#e1e1e1"></div>
<div style="position:absolute;left:1753px;top:373px;width:1px;height:771px;background:#dadada"></div>
<div style="position:absolute;left:1753px;top:342px;width:1px;height:31px;background:#e1e1e1"></div>
<div style="position:absolute;left:1859px;top:373px;width:1px;height:771px;background:#dadada"></div>
<div style="position:absolute;left:1859px;top:342px;width:1px;height:31px;background:#e1e1e1"></div>
<div style="position:absolute;left:1964px;top:373px;width:1px;height:771px;background:#dadada"></div>
<div style="position:absolute;left:1964px;top:342px;width:1px;height:31px;background:#e1e1e1"></div>
<div style="position:absolute;left:2070px;top:373px;width:1px;height:771px;background:#dadada"></div>
<div style="position:absolute;left:2070px;top:342px;width:1px;height:31px;background:#e1e1e1"></div>
<div style="position:absolute;left:0px;top:455px;width:2133px;height:1px;background:#dadada"></div>
<div style="position:absolute;left:0px;top:506px;width:2133px;height:1px;background:#dadada"></div>
<div style="position:absolute;left:0px;top:539px;width:2133px;height:1px;background:#dadada"></div>
<div style="position:absolute;left:0px;top:572px;width:2133px;height:1px;background:#dadada"></div>
<div style="position:absolute;left:0px;top:605px;width:2133px;height:1px;background:#dadada"></div>
<div style="position:absolute;left:0px;top:639px;width:2133px;height:1px;background:#dadada"></div>
<div style="position:absolute;left:0px;top:672px;width:2133px;height:1px;background:#dadada"></div>
<div style="position:absolute;left:0px;top:705px;width:2133px;height:1px;background:#dadada"></div>
<div style="position:absolute;left:0px;top:738px;width:2133px;height:1px;background:#dadada"></div>
<div style="position:absolute;left:0px;top:771px;width:2133px;height:1px;background:#dadada"></div>
<div style="position:absolute;left:0px;top:804px;width:2133px;height:1px;background:#dadada"></div>
<div style="position:absolute;left:0px;top:837px;width:2133px;height:1px;background:#dadada"></div>
<div style="position:absolute;left:0px;top:870px;width:2133px;height:1px;background:#dadada"></div>
<div style="position:absolute;left:0px;top:903px;width:2133px;height:1px;background:#dadada"></div>
<div style="position:absolute;left:0px;top:936px;width:2133px;height:1px;background:#dadada"></div>
<div style="position:absolute;left:0px;top:969px;width:2133px;height:1px;background:#dadada"></div>
<div style="position:absolute;left:0px;top:1002px;width:2133px;height:1px;background:#dadada"></div>
<div style="position:absolute;left:0px;top:1035px;width:2133px;height:1px;background:#dadada"></div>
<div style="position:absolute;left:0px;top:1068px;width:2133px;height:1px;background:#dadada"></div>
<div style="position:absolute;left:0px;top:1101px;width:2133px;height:1px;background:#dadada"></div>
<div style="position:absolute;left:0px;top:1134px;width:2133px;height:1px;background:#dadada"></div>
<div style="position:absolute;left:0px;top:373px;width:2133px;height:1px;background:#c8c8c8"></div>
<div style="position:absolute;left:56px;top:342px;width:1.5px;height:802px;background:#c8c8c8"></div>
<svg style="left:29px;top:345px" width="25" height="24"><path d="M24 0 V24 H0 Z" fill="#b3b3b3"/></svg>
<span class="tx" style="left:137.0px;width:80px;text-align:center;top:346px;font-size:23.2px;color:#605e5c">A</span>
<span class="tx" style="left:427.0px;width:80px;text-align:center;top:346px;font-size:23.2px;color:#605e5c">B</span>
<span class="tx" style="left:744.0px;width:80px;text-align:center;top:346px;font-size:23.2px;color:#605e5c">C</span>
<span class="tx" style="left:1038.0px;width:80px;text-align:center;top:346px;font-size:23.2px;color:#605e5c">D</span>
<span class="tx" style="left:1238.0px;width:80px;text-align:center;top:346px;font-size:23.2px;color:#605e5c">E</span>
<span class="tx" style="left:1343.5px;width:80px;text-align:center;top:346px;font-size:23.2px;color:#605e5c">F</span>
<span class="tx" style="left:1449.0px;width:80px;text-align:center;top:346px;font-size:23.2px;color:#605e5c">G</span>
<span class="tx" style="left:1554.5px;width:80px;text-align:center;top:346px;font-size:23.2px;color:#605e5c">H</span>
<span class="tx" style="left:1660.0px;width:80px;text-align:center;top:346px;font-size:23.2px;color:#605e5c">I</span>
<span class="tx" style="left:1766.0px;width:80px;text-align:center;top:346px;font-size:23.2px;color:#605e5c">J</span>
<span class="tx" style="left:1871.5px;width:80px;text-align:center;top:346px;font-size:23.2px;color:#605e5c">K</span>
<span class="tx" style="left:1977.0px;width:80px;text-align:center;top:346px;font-size:23.2px;color:#605e5c">L</span>
<span class="tx" style="left:2083.0px;width:80px;text-align:center;top:346px;font-size:23.2px;color:#605e5c">M</span>
<div style="position:absolute;left:931px;top:342px;width:294px;height:31px;background:#dbd9d7"></div>
<span class="tx" style="left:1038px;width:80px;text-align:center;top:346px;font-size:23.2px;color:#107c41;font-weight:700">D</span>
<div style="position:absolute;left:931px;top:371px;width:294px;height:3px;background:#107c41"></div>
<span class="tx" style="left:0;width:51px;text-align:center;top:428px;font-size:23.2px;color:#605e5c;font-weight:400">1</span>
<span class="tx" style="left:0;width:51px;text-align:center;top:480px;font-size:23.2px;color:#605e5c;font-weight:400">2</span>
<div style="position:absolute;left:0px;top:507px;width:56px;height:32px;background:#e1dfdd"></div>
<span class="tx" style="left:0;width:51px;text-align:center;top:513px;font-size:23.2px;color:#107c41;font-weight:700">3</span>
<span class="tx" style="left:0;width:51px;text-align:center;top:546px;font-size:23.2px;color:#605e5c;font-weight:400">4</span>
<span class="tx" style="left:0;width:51px;text-align:center;top:579px;font-size:23.2px;color:#605e5c;font-weight:400">5</span>
<span class="tx" style="left:0;width:51px;text-align:center;top:613px;font-size:23.2px;color:#605e5c;font-weight:400">6</span>
<span class="tx" style="left:0;width:51px;text-align:center;top:646px;font-size:23.2px;color:#605e5c;font-weight:400">7</span>
<span class="tx" style="left:0;width:51px;text-align:center;top:679px;font-size:23.2px;color:#605e5c;font-weight:400">8</span>
<span class="tx" style="left:0;width:51px;text-align:center;top:712px;font-size:23.2px;color:#605e5c;font-weight:400">9</span>
<span class="tx" style="left:0;width:51px;text-align:center;top:745px;font-size:23.2px;color:#605e5c;font-weight:400">10</span>
<span class="tx" style="left:0;width:51px;text-align:center;top:778px;font-size:23.2px;color:#605e5c;font-weight:400">11</span>
<span class="tx" style="left:0;width:51px;text-align:center;top:811px;font-size:23.2px;color:#605e5c;font-weight:400">12</span>
<span class="tx" style="left:0;width:51px;text-align:center;top:844px;font-size:23.2px;color:#605e5c;font-weight:400">13</span>
<span class="tx" style="left:0;width:51px;text-align:center;top:877px;font-size:23.2px;color:#605e5c;font-weight:400">14</span>
<span class="tx" style="left:0;width:51px;text-align:center;top:910px;font-size:23.2px;color:#605e5c;font-weight:400">15</span>
<span class="tx" style="left:0;width:51px;text-align:center;top:943px;font-size:23.2px;color:#605e5c;font-weight:400">16</span>
<span class="tx" style="left:0;width:51px;text-align:center;top:976px;font-size:23.2px;color:#605e5c;font-weight:400">17</span>
<span class="tx" style="left:0;width:51px;text-align:center;top:1009px;font-size:23.2px;color:#605e5c;font-weight:400">18</span>
<span class="tx" style="left:0;width:51px;text-align:center;top:1042px;font-size:23.2px;color:#605e5c;font-weight:400">19</span>
<span class="tx" style="left:0;width:51px;text-align:center;top:1075px;font-size:23.2px;color:#605e5c;font-weight:400">20</span>
<span class="tx" style="left:0;width:51px;text-align:center;top:1108px;font-size:23.2px;color:#605e5c;font-weight:400">21</span>
<div style="position:absolute;left:55px;top:505px;width:3px;height:37px;background:#107c41"></div>
<div style="position:absolute;left:58px;top:374px;width:1167px;height:79px;background:#2f4f8e"></div>
<div style="position:absolute;left:58px;top:453px;width:1167px;height:2px;background:#8ea9db"></div>
<div style="position:absolute;left:58px;top:455px;width:1167px;height:51px;background:#4472c4"></div>
<div style="position:absolute;left:58px;top:506px;width:1167px;height:2px;background:#8ea9db"></div>
<div style="position:absolute;left:58px;top:508px;width:1167px;height:32px;background:#d9e1f2"></div>
<div style="position:absolute;left:58px;top:539px;width:1167px;height:2px;background:#8ea9db"></div>
<span id="t51" class="tx" style="left:61.50px;top:514.00px;font-size:21.8px;color:#000;font-weight:400;font-family:'Liberation Sans', sans-serif;">Sofia</span>
<span id="t52" class="tx" style="transform:scaleX(1.0551);left:517.40px;top:514.00px;font-size:21.8px;color:#000;font-weight:400;font-family:'Liberation Sans', sans-serif;">07/08/2001</span>
<span id="t53" class="tx" style="transform:scaleX(0.9969);left:1106.00px;top:514.00px;font-size:21.8px;color:#000;font-weight:400;font-family:'Liberation Sans', sans-serif;">26.000,00 €</span>
<div style="position:absolute;left:58px;top:572px;width:1167px;height:2px;background:#8ea9db"></div>
<span id="t54" class="tx" style="left:61.50px;top:547.00px;font-size:21.8px;color:#000;font-weight:400;font-family:'Liberation Sans', sans-serif;">Riccardo</span>
<span id="t55" class="tx" style="transform:scaleX(1.0551);left:517.40px;top:547.00px;font-size:21.8px;color:#000;font-weight:400;font-family:'Liberation Sans', sans-serif;">18/10/2005</span>
<span id="t56" class="tx" style="transform:scaleX(0.9969);left:1106.00px;top:547.00px;font-size:21.8px;color:#000;font-weight:400;font-family:'Liberation Sans', sans-serif;">35.000,00 €</span>
<div style="position:absolute;left:58px;top:574px;width:1167px;height:32px;background:#d9e1f2"></div>
<div style="position:absolute;left:58px;top:605px;width:1167px;height:2px;background:#8ea9db"></div>
<span id="t57" class="tx" style="left:61.50px;top:580.00px;font-size:21.8px;color:#000;font-weight:400;font-family:'Liberation Sans', sans-serif;">Claudio</span>
<span id="t58" class="tx" style="transform:scaleX(1.0551);left:517.40px;top:580.00px;font-size:21.8px;color:#000;font-weight:400;font-family:'Liberation Sans', sans-serif;">30/06/2007</span>
<span id="t59" class="tx" style="transform:scaleX(0.9969);left:1106.00px;top:580.00px;font-size:21.8px;color:#000;font-weight:400;font-family:'Liberation Sans', sans-serif;">66.000,00 €</span>
<div style="position:absolute;left:58px;top:638px;width:1167px;height:2px;background:#8ea9db"></div>
<span id="t60" class="tx" style="left:61.50px;top:613.00px;font-size:21.8px;color:#000;font-weight:400;font-family:'Liberation Sans', sans-serif;">Giacomo</span>
<span id="t61" class="tx" style="transform:scaleX(1.0709);left:517.40px;top:613.00px;font-size:21.8px;color:#000;font-weight:400;font-family:'Liberation Sans', sans-serif;">11/12/2008</span>
<span id="t62" class="tx" style="transform:scaleX(0.9969);left:1106.00px;top:613.00px;font-size:21.8px;color:#000;font-weight:400;font-family:'Liberation Sans', sans-serif;">40.000,00 €</span>
<div style="position:absolute;left:58px;top:640px;width:1167px;height:32px;background:#d9e1f2"></div>
<div style="position:absolute;left:58px;top:671px;width:1167px;height:2px;background:#8ea9db"></div>
<span id="t63" class="tx" style="left:61.50px;top:646.00px;font-size:21.8px;color:#000;font-weight:400;font-family:'Liberation Sans', sans-serif;">Sara</span>
<span id="t64" class="tx" style="transform:scaleX(1.0551);left:517.40px;top:646.00px;font-size:21.8px;color:#000;font-weight:400;font-family:'Liberation Sans', sans-serif;">14/02/2010</span>
<span id="t65" class="tx" style="transform:scaleX(0.9969);left:1106.00px;top:646.00px;font-size:21.8px;color:#000;font-weight:400;font-family:'Liberation Sans', sans-serif;">33.000,00 €</span>
<div style="position:absolute;left:58px;top:704px;width:1167px;height:2px;background:#8ea9db"></div>
<span id="t66" class="tx" style="left:61.50px;top:679.00px;font-size:21.8px;color:#000;font-weight:400;font-family:'Liberation Sans', sans-serif;">Alessandro</span>
<span id="t67" class="tx" style="transform:scaleX(1.0551);left:517.40px;top:679.00px;font-size:21.8px;color:#000;font-weight:400;font-family:'Liberation Sans', sans-serif;">21/09/2014</span>
<span id="t68" class="tx" style="transform:scaleX(0.9969);left:1106.00px;top:679.00px;font-size:21.8px;color:#000;font-weight:400;font-family:'Liberation Sans', sans-serif;">18.000,00 €</span>
<div style="position:absolute;left:58px;top:706px;width:1167px;height:32px;background:#d9e1f2"></div>
<div style="position:absolute;left:58px;top:737px;width:1167px;height:2px;background:#8ea9db"></div>
<span id="t69" class="tx" style="left:61.50px;top:712.00px;font-size:21.8px;color:#000;font-weight:400;font-family:'Liberation Sans', sans-serif;">Francesco</span>
<span id="t70" class="tx" style="transform:scaleX(1.0551);left:517.40px;top:712.00px;font-size:21.8px;color:#000;font-weight:400;font-family:'Liberation Sans', sans-serif;">15/03/2015</span>
<span id="t71" class="tx" style="transform:scaleX(0.9969);left:1106.00px;top:712.00px;font-size:21.8px;color:#000;font-weight:400;font-family:'Liberation Sans', sans-serif;">55.000,00 €</span>
<div style="position:absolute;left:58px;top:770px;width:1167px;height:2px;background:#8ea9db"></div>
<span id="t72" class="tx" style="left:61.50px;top:745.00px;font-size:21.8px;color:#000;font-weight:400;font-family:'Liberation Sans', sans-serif;">Beatrice</span>
<span id="t73" class="tx" style="transform:scaleX(1.0551);left:517.40px;top:745.00px;font-size:21.8px;color:#000;font-weight:400;font-family:'Liberation Sans', sans-serif;">26/04/2016</span>
<span id="t74" class="tx" style="transform:scaleX(0.9969);left:1106.00px;top:745.00px;font-size:21.8px;color:#000;font-weight:400;font-family:'Liberation Sans', sans-serif;">27.000,00 €</span>
<div style="position:absolute;left:58px;top:772px;width:1167px;height:32px;background:#d9e1f2"></div>
<div style="position:absolute;left:58px;top:803px;width:1167px;height:2px;background:#8ea9db"></div>
<span id="t75" class="tx" style="left:61.50px;top:778.00px;font-size:21.8px;color:#000;font-weight:400;font-family:'Liberation Sans', sans-serif;">Arianna</span>
<span id="t76" class="tx" style="transform:scaleX(1.0551);left:517.40px;top:778.00px;font-size:21.8px;color:#000;font-weight:400;font-family:'Liberation Sans', sans-serif;">09/07/2017</span>
<span id="t77" class="tx" style="transform:scaleX(0.9969);left:1106.00px;top:778.00px;font-size:21.8px;color:#000;font-weight:400;font-family:'Liberation Sans', sans-serif;">70.000,00 €</span>
<div style="position:absolute;left:58px;top:836px;width:1167px;height:2px;background:#8ea9db"></div>
<span id="t78" class="tx" style="left:61.50px;top:811.00px;font-size:21.8px;color:#000;font-weight:400;font-family:'Liberation Sans', sans-serif;">Luigi</span>
<span id="t79" class="tx" style="transform:scaleX(1.0551);left:517.40px;top:811.00px;font-size:21.8px;color:#000;font-weight:400;font-family:'Liberation Sans', sans-serif;">01/05/2019</span>
<span id="t80" class="tx" style="transform:scaleX(0.9969);left:1106.00px;top:811.00px;font-size:21.8px;color:#000;font-weight:400;font-family:'Liberation Sans', sans-serif;">21.000,00 €</span>
<div style="position:absolute;left:58px;top:838px;width:1167px;height:32px;background:#d9e1f2"></div>
<div style="position:absolute;left:58px;top:869px;width:1167px;height:2px;background:#8ea9db"></div>
<span id="t81" class="tx" style="left:61.50px;top:844.00px;font-size:21.8px;color:#000;font-weight:400;font-family:'Liberation Sans', sans-serif;">Simona</span>
<span id="t82" class="tx" style="transform:scaleX(1.0709);left:517.40px;top:844.00px;font-size:21.8px;color:#000;font-weight:400;font-family:'Liberation Sans', sans-serif;">05/11/2020</span>
<span id="t83" class="tx" style="transform:scaleX(0.9969);left:1106.00px;top:844.00px;font-size:21.8px;color:#000;font-weight:400;font-family:'Liberation Sans', sans-serif;">42.000,00 €</span>
<div style="position:absolute;left:1223.5px;top:455px;width:2px;height:415px;background:#8ea9db"></div>
<span id="t84" class="tx" style="transform:scaleX(0.8700);left:467.00px;top:400.00px;font-size:31.98px;color:#fff;font-weight:700;font-family:'Liberation Sans', sans-serif;">INFORMAZIONI DIPENDENTI</span>
<span id="t85" class="tx" style="transform:scaleX(0.8944);left:145.30px;top:471.00px;font-size:24.71px;color:#fff;font-weight:700;font-family:'Liberation Sans', sans-serif;">NOME</span>
<span id="t86" class="tx" style="transform:scaleX(0.8783);left:369.50px;top:471.00px;font-size:24.71px;color:#fff;font-weight:700;font-family:'Liberation Sans', sans-serif;">DATA ASSUNZIONE</span>
<span id="t87" class="tx" style="transform:scaleX(0.8995);left:1025.00px;top:471.00px;font-size:24.71px;color:#fff;font-weight:700;font-family:'Liberation Sans', sans-serif;">SALARIO</span>
<div style="position:absolute;left:267.5px;top:467.3px;width:27px;height:27px;box-sizing:border-box;border:1px solid #808080;border-radius:3px;background:#fff"></div><svg style="left:0;top:0" width="1" height="1"><path d="M275.1 478.2 L280.9 483.6 L286.8 478.2" fill="none" stroke="#1a1a1a" stroke-width="1.4"/></svg>
<div style="position:absolute;left:607.5px;top:467.3px;width:27px;height:27px;box-sizing:border-box;border:1px solid #808080;border-radius:3px;background:#fff"></div><svg style="left:0;top:0" width="1" height="1"><path d="M612.1 483.1 L615.9 487.5 L619.8 483.1" fill="none" stroke="#1a1a1a" stroke-width="1.4"/><path d="M626.5 487.5 V474.3 M624.7 476.3 L626.5 474.0 L628.3 476.3" fill="none" stroke="#1a1a1a" stroke-width="1.4"/></svg>
<div style="position:absolute;left:1193.5px;top:467.3px;width:27px;height:27px;box-sizing:border-box;border:1px solid #808080;border-radius:3px;background:#fff"></div><svg style="left:0;top:0" width="1" height="1"><path d="M1201.1 478.2 L1206.9 483.6 L1212.8 478.2" fill="none" stroke="#1a1a1a" stroke-width="1.4"/></svg>
<div style="position:absolute;left:931px;top:505px;width:295px;height:36px;box-sizing:border-box;border:2.5px solid #107c41"></div>
<div style="position:absolute;left:1219px;top:537px;width:7px;height:7px;background:#107c41;border:1px solid #fff"></div>
<div style="position:absolute;left:1218px;top:864px;width:7px;height:7px;background:#1f3864"></div>
<div style="position:absolute;left:2133px;top:373px;width:24px;height:771px;background:#e6e6e6"></div>
<div style="position:absolute;left:2133px;top:375px;width:24px;height:312px;box-sizing:border-box;border:1px solid #c8c8c8;background:#fff"></div>
<div style="position:absolute;left:2134px;top:398px;width:22px;height:1px;background:#c8c8c8"></div>
<svg style="left:2139px;top:382px" width="12" height="8"><path d="M0 7 L6 1 L12 7 Z" fill="#666"/></svg>
<div style="position:absolute;left:2133px;top:1118px;width:24px;height:25px;box-sizing:border-box;border:1px solid #c8c8c8;background:#fff"></div>
<svg style="left:2139px;top:1127px" width="12" height="8"><path d="M0 1 L6 7 L12 1 Z" fill="#666"/></svg>
<div style="position:absolute;left:58px;top:1144px;width:2075px;height:24px;background:#e6e6e6"></div>
<div style="position:absolute;left:58px;top:1144px;width:26px;height:23px;box-sizing:border-box;border:1px solid #c8c8c8;background:#fff"></div>
<svg style="left:65px;top:1149px" width="8" height="12"><path d="M7 0 L1 6 L7 12 Z" fill="#666"/></svg>
<div style="position:absolute;left:83px;top:1144px;width:960px;height:23px;box-sizing:border-box;border:1px solid #c8c8c8;background:#fff"></div>
<div style="position:absolute;left:2108px;top:1144px;width:25px;height:23px;box-sizing:border-box;border:1px solid #c8c8c8;background:#fff"></div>
<svg style="left:2117px;top:1149px" width="8" height="12"><path d="M1 0 L7 6 L1 12 Z" fill="#666"/></svg>
<div style="position:absolute;left:0px;top:1167px;width:2157px;height:54px;background:#f3f3f3"></div>
<svg style="left:0;top:0" width="1" height="1"><path d="M27 1184 L20 1193 L27 1202" fill="none" stroke="#b3b0ad" stroke-width="1.5"/><path d="M73 1184 L80 1193 L73 1202" fill="none" stroke="#b3b0ad" stroke-width="1.5"/><path d="M118.5 1186 H139.5 M118.5 1193.5 H139.5 M118.5 1201 H139.5" stroke="#323130" stroke-width="1.7"/><path d="M291 1183.5 V1202.5 M281.5 1193 H300.5" stroke="#323130" stroke-width="1.7"/></svg>
<span id="t88" class="tx" style="transform:scaleX(1.0350);left:174.30px;top:1183.00px;font-size:21.8px;color:#323130;font-weight:400;font-family:'Liberation Sans', sans-serif;-webkit-text-stroke:0.55px #323130;">Foglio1</span>
<div style="position:absolute;left:170px;top:1217px;width:81px;height:4px;background:#107c41"></div>
<div style="position:absolute;left:0px;top:1221px;width:2157px;height:34px;background:#fff"></div>
<div style="position:absolute;left:0px;top:1221px;width:2157px;height:1px;background:#e1dfdd"></div>
<span id="t89" class="tx" style="transform:scaleX(0.9537);left:20.00px;top:1230.00px;font-size:21.08px;color:#484644;font-weight:400;font-family:'Liberation Sans', sans-serif;">Modalità di calcolo: Automatico</span>
<span id="t90" class="tx" style="transform:scaleX(0.9256);left:325.50px;top:1230.00px;font-size:21.08px;color:#484644;font-weight:400;font-family:'Liberation Sans', sans-serif;">Statistiche cartella di lavoro</span>
<svg style="left:1647px;top:1239px" width="10" height="7"><path d="M1 1 L5 5 L9 1" fill="none" stroke="#323130" stroke-width="1.5"/></svg>
<span id="t91" class="tx" style="transform:scaleX(0.9340);left:1725.00px;top:1230.00px;font-size:21.08px;color:#484644;font-weight:400;font-family:'Liberation Sans', sans-serif;">Invia feedback a Microsoft</span>
<svg style="left:0;top:0" width="1" height="1"><path d="M2021 1238.5 H2040 M2111 1238 H2130 M2120.5 1228.5 V1247.5" stroke="#484644" stroke-width="1.7"/></svg>
<span id="t92" class="tx" style="transform:scaleX(0.8624);left:2053.50px;top:1230.00px;font-size:21.08px;color:#484644;font-weight:400;font-family:'Liberation Sans', sans-serif;">100%</span>
<div style="position:absolute;left:637px;top:343px;width:444px;height:902px;background:#fff;border-radius:0 0 4px 4px;box-shadow:0 6px 14px rgba(0,0,0,0.18),0 1px 4px rgba(0,0,0,0.12)"></div>
<div style="position:absolute;left:640px;top:348px;width:437px;height:51px;background:#f3f2f1"></div>
<div style="position:absolute;left:637px;top:343px;width:444px;height:420px;overflow:hidden">
<span id="t93" class="tx" style="transform:scaleX(1.0180);left:68.00px;top:22.00px;font-size:22.67px;color:#323130;font-weight:400;font-family:'Liberation Sans', sans-serif;">Ordina dal meno recente al più recente</span>
<span id="t94" class="tx" style="transform:scaleX(1.0180);left:68.00px;top:77.00px;font-size:22.67px;color:#323130;font-weight:400;font-family:'Liberation Sans', sans-serif;">Ordina dal più recente al meno recente</span>
<span id="t95" class="tx" style="transform:scaleX(1.0180);left:68.00px;top:134.00px;font-size:22.67px;color:#323130;font-weight:400;font-family:'Liberation Sans', sans-serif;">Ordina per colore</span>
<span id="t96" class="tx" style="transform:scaleX(1.0180);left:68.00px;top:190.00px;font-size:22.67px;color:#323130;font-weight:400;font-family:'Liberation Sans', sans-serif;">Ordinamento personalizzato</span>
<span id="t97" class="tx" style="transform:scaleX(1.0180);left:68.00px;top:252.00px;font-size:22.67px;color:#323130;font-weight:400;font-family:'Liberation Sans', sans-serif;">Visualizzazione foglio</span>
<span id="t98" class="tx" style="transform:scaleX(0.9979);left:68.00px;top:313.00px;font-size:22.67px;color:#b3b0ad;font-weight:400;font-family:'Liberation Sans', sans-serif;">Cancella filtro da</span>
<span id="t99" class="tx" style="transform:scaleX(0.9658);left:245.80px;top:313.00px;font-size:22.67px;color:#b3b0ad;font-weight:400;font-family:'Liberation Sans', sans-serif;">'DATA ASSUNZIONE</span>
<span id="t100" class="tx" style="transform:scaleX(1.0180);left:68.00px;top:370.00px;font-size:22.67px;color:#323130;font-weight:400;font-family:'Liberation Sans', sans-serif;">Filtri per date</span>
</div>
<svg style="left:0;top:0" width="1" height="1"><path d="M658.6 372.7 L664.1 359.5 L669.6 372.7 M660.8000000000001 368.212 H667.4" fill="none" stroke="#2b88d8" stroke-width="1.6" stroke-linejoin="miter"/><path d="M659.1 376.9 H667.78 L659.1 388.49999999999994 H668.28" fill="none" stroke="#3b3a39" stroke-width="1.6" stroke-linejoin="miter"/><path d="M678.7 359.5 V389.0 M673.2 383.5 L678.7 389.0 L684.2 383.5" fill="none" stroke="#3b3a39" stroke-width="1.6"/></svg>
<svg style="left:0;top:0" width="1" height="1"><path d="M659.1 416.3 H667.78 L659.1 427.9 H668.28" fill="none" stroke="#3b3a39" stroke-width="1.6" stroke-linejoin="miter"/><path d="M658.6 445.29999999999995 L664.1 432.09999999999997 L669.6 445.29999999999995 M660.8000000000001 440.81199999999995 H667.4" fill="none" stroke="#2b88d8" stroke-width="1.6" stroke-linejoin="miter"/><path d="M678.7 415.5 V445.0 M673.2 439.5 L678.7 445.0 L684.2 439.5" fill="none" stroke="#3b3a39" stroke-width="1.6"/></svg>
<svg style="left:0;top:0" width="1" height="1"><rect x="657.6" y="528.6" width="27.8" height="27.8" fill="#fafafa" stroke="#3b3a39" stroke-width="1.6"/><rect x="658.4" y="529.4" width="26.2" height="3.8" fill="#b3b0ad"/>
<path d="M665.6 536 V552 M660.8 547 L665.6 552 L670.4 547" fill="none" stroke="#2b88d8" stroke-width="1.6"/><path d="M677.4 552 V536.6 M672.4 541.6 L677.4 536.6 L682.4 541.6" fill="none" stroke="#3b3a39" stroke-width="1.5"/></svg>
<svg style="left:0;top:0" width="1" height="1"><path d="M657.5 603.6 Q671.5 589 685.5 603.6 Q671.5 618.2 657.5 603.6 Z" fill="none" stroke="#3b3a39" stroke-width="1.6"/><circle cx="671.5" cy="603.6" r="6.6" fill="none" stroke="#3b3a39" stroke-width="1.6"/><circle cx="671.5" cy="603.6" r="2.1" fill="#3b3a39"/></svg>
<svg style="left:0;top:0" width="1" height="1"><path d="M675.4 665.7 L684.4 656.6 V652.6 H657.6 V656.6 L667.4 667.8 V681" fill="none" stroke="#b3b0ad" stroke-width="1.5"/><path d="M672.2 667 L687.5 682.4 M687.5 667 L672.2 682.4" stroke="#f4a7aa" stroke-width="1.5"/></svg>
<svg style="left:1048px;top:476px" width="14" height="24"><path d="M2 1.5 L11.5 11.8 L2 22" fill="none" stroke="#323130" stroke-width="1.6"/></svg>
<svg style="left:1048px;top:593px" width="14" height="24"><path d="M2 1.5 L11.5 11.8 L2 22" fill="none" stroke="#323130" stroke-width="1.6"/></svg>
<svg style="left:1048px;top:711px" width="14" height="24"><path d="M2 1.5 L11.5 11.8 L2 22" fill="none" stroke="#323130" stroke-width="1.6"/></svg>
<div style="position:absolute;left:651px;top:573px;width:416px;height:2px;background:#e1dfdd"></div>
<div style="position:absolute;left:651px;top:635px;width:416px;height:2px;background:#e1dfdd"></div>
<div style="position:absolute;left:693px;top:753px;width:369px;height:2px;background:#e1dfdd"></div>
<div style="position:absolute;left:693px;top:761px;width:371px;height:52px;box-sizing:border-box;border:1px solid #8a8886;border-radius:5px;background:#fff"></div>
<svg style="left:0;top:0" width="1" height="1"><circle cx="719.5" cy="784.5" r="8.5" fill="none" stroke="#3b3a39" stroke-width="1.5"/><path d="M713.5 790.5 L708 796.5" stroke="#3b3a39" stroke-width="1.6" stroke-linecap="round"/></svg>
<span id="t101" class="tx" style="transform:scaleX(0.8975);left:744.00px;top:777.00px;font-size:22.97px;color:#605e5c;font-weight:400;font-family:'Liberation Sans', sans-serif;">Cerca</span>
<div style="position:absolute;left:702px;top:840.5px;width:26px;height:26px;box-sizing:border-box;border:1px solid #605e5c;border-radius:3px;background:#fff"></div>
<svg style="left:702px;top:840.5px" width="26" height="26"><path d="M6 13 L10.5 18 L20 7.5" fill="none" stroke="#323130" stroke-width="1.4"/></svg>
<span id="t102" class="tx" style="left:744.00px;top:843.00px;font-size:22.67px;color:#323130;font-weight:400;font-family:'Liberation Sans', sans-serif;">Seleziona tutto</span>
<div style="position:absolute;left:702px;top:886.5px;width:26px;height:26px;box-sizing:border-box;border:1px solid #605e5c;border-radius:3px;background:#fff"></div>
<svg style="left:702px;top:886.5px" width="26" height="26"><path d="M6 13 L10.5 18 L20 7.5" fill="none" stroke="#323130" stroke-width="1.4"/></svg>
<span id="t103" class="tx" style="left:744.00px;top:889.00px;font-size:22.67px;color:#323130;font-weight:400;font-family:'Liberation Sans', sans-serif;">2020</span>
<svg style="left:0;top:0" width="1" height="1"><path d="M680 891.5 V906.5 M672.5 899 H687.5" stroke="#323130" stroke-width="1.5"/></svg>
<div style="position:absolute;left:702px;top:932.5px;width:26px;height:26px;box-sizing:border-box;border:1px solid #605e5c;border-radius:3px;background:#fff"></div>
<svg style="left:702px;top:932.5px" width="26" height="26"><path d="M6 13 L10.5 18 L20 7.5" fill="none" stroke="#323130" stroke-width="1.4"/></svg>
<span id="t104" class="tx" style="left:744.00px;top:935.00px;font-size:22.67px;color:#323130;font-weight:400;font-family:'Liberation Sans', sans-serif;">2019</span>
<svg style="left:0;top:0" width="1" height="1"><path d="M680 937.5 V952.5 M672.5 945 H687.5" stroke="#323130" stroke-width="1.5"/></svg>
<div style="position:absolute;left:702px;top:978.5px;width:26px;height:26px;box-sizing:border-box;border:1px solid #605e5c;border-radius:3px;background:#fff"></div>
<svg style="left:702px;top:978.5px" width="26" height="26"><path d="M6 13 L10.5 18 L20 7.5" fill="none" stroke="#323130" stroke-width="1.4"/></svg>
<span id="t105" class="tx" style="left:744.00px;top:981.00px;font-size:22.67px;color:#323130;font-weight:400;font-family:'Liberation Sans', sans-serif;">2017</span>
<svg style="left:0;top:0" width="1" height="1"><path d="M680 983.5 V998.5 M672.5 991 H687.5" stroke="#323130" stroke-width="1.5"/></svg>
<div style="position:absolute;left:702px;top:1024.5px;width:26px;height:26px;box-sizing:border-box;border:1px solid #605e5c;border-radius:3px;background:#fff"></div>
<svg style="left:702px;top:1024.5px" width="26" height="26"><path d="M6 13 L10.5 18 L20 7.5" fill="none" stroke="#323130" stroke-width="1.4"/></svg>
<span id="t106" class="tx" style="left:744.00px;top:1027.00px;font-size:22.67px;color:#323130;font-weight:400;font-family:'Liberation Sans', sans-serif;">2016</span>
<svg style="left:0;top:0" width="1" height="1"><path d="M680 1029.5 V1044.5 M672.5 1037 H687.5" stroke="#323130" stroke-width="1.5"/></svg>
<div style="position:absolute;left:702px;top:1070.5px;width:26px;height:26px;box-sizing:border-box;border:1px solid #605e5c;border-radius:3px;background:#fff"></div>
<svg style="left:702px;top:1070.5px" width="26" height="26"><path d="M6 13 L10.5 18 L20 7.5" fill="none" stroke="#323130" stroke-width="1.4"/></svg>
<span id="t107" class="tx" style="left:744.00px;top:1073.00px;font-size:22.67px;color:#323130;font-weight:400;font-family:'Liberation Sans', sans-serif;">2015</span>
<svg style="left:0;top:0" width="1" height="1"><path d="M680 1075.5 V1090.5 M672.5 1083 H687.5" stroke="#323130" stroke-width="1.5"/></svg>
<div style="position:absolute;left:702px;top:1117.5px;width:26px;height:26px;box-sizing:border-box;border:1px solid #605e5c;border-radius:3px;background:#fff"></div>
<svg style="left:702px;top:1117.5px" width="26" height="26"><path d="M6 13 L10.5 18 L20 7.5" fill="none" stroke="#323130" stroke-width="1.4"/></svg>
<span id="t108" class="tx" style="left:744.00px;top:1120.00px;font-size:22.67px;color:#323130;font-weight:400;font-family:'Liberation Sans', sans-serif;">2014</span>
<svg style="left:0;top:0" width="1" height="1"><path d="M680 1122.5 V1137.5 M672.5 1130 H687.5" stroke="#323130" stroke-width="1.5"/></svg>
<div style="position:absolute;left:1055px;top:837px;width:9px;height:192px;background:#e1e1e1;border-radius:5px"></div>
<div style="position:absolute;left:693px;top:1175px;width:155px;height:53px;border-radius:3px;background:#217346"></div>
<span id="t109" class="tx" style="transform:scaleX(1.0188);left:731.00px;top:1192.00px;font-size:23.26px;color:#fff;font-weight:400;font-family:'Liberation Sans', sans-serif;-webkit-text-stroke:0.6px #fff;">Applica</span>
<div style="position:absolute;left:635px;top:342px;width:445px;height:62px;box-sizing:border-box;border:5.5px solid #f00"></div>
<svg style="left:0;top:0" width="1" height="1"><ellipse cx="621.7" cy="479.2" rx="31.5" ry="32" fill="none" stroke="#f00" stroke-width="5.6"/></svg>
</body></html>
